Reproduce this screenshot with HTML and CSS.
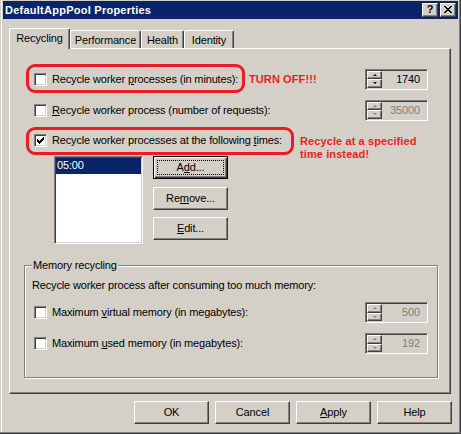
FILE: index.html
```html
<!DOCTYPE html>
<html>
<head>
<meta charset="utf-8">
<title>DefaultAppPool Properties</title>
<link rel="stylesheet" href="styles.css">
</head>
<body>
<div class="window">
  <div class="titlebar">
    <span class="title">DefaultAppPool Properties</span>
    <div class="caps">
      <span class="capbtn">?</span>
      <span class="capbtn"><svg width="8" height="7" viewBox="0 0 8 7" shape-rendering="crispEdges"><path d="M0 0h2v1h1v1h2v-1h1v-1h2v1h-1v1h-1v1h-1v1h1v1h1v1h1v1h-2v-1h-1v-1h-2v1h-1v1h-2v-1h1v-1h1v-1h1v-1h-1v-1h-1v-1h-1z"/></svg></span>
    </div>
  </div>

  <div class="tabs">
    <div class="tab active">Recycling</div>
    <div class="tab t-perf">Performance</div>
    <div class="tab t-health">Health</div>
    <div class="tab t-ident">Identity</div>
  </div>

  <div class="panel">
    <div class="row r1">
      <div class="chk"><span class="box"></span><span class="lbl">Recycle worker <u>p</u>rocesses (in minutes):</span></div>
      <div class="spin"><div class="arrows"><span class="ab"><i class="up"></i></span><span class="ab"><i class="dn"></i></span></div><span class="val">1740</span></div>
    </div>
    <div class="row r2">
      <div class="chk"><span class="box"></span><span class="lbl"><u>R</u>ecycle worker process (number of requests):</span></div>
      <div class="spin dis"><div class="arrows"><span class="ab"><i class="up"></i></span><span class="ab"><i class="dn"></i></span></div><span class="val">35000</span></div>
    </div>
    <div class="row r3">
      <div class="chk"><span class="box"><svg width="7" height="7" viewBox="0 0 7 7" shape-rendering="crispEdges"><path d="M6 0h1v3h-1v1h-1v1h-1v1h-1v1h-1v-1h-1v-1h-1v-3h1v1h1v1h1v-1h1v-1h1z"/></svg></span><span class="lbl">Recycle worker processes at the following <u>t</u>imes:</span></div>
    </div>

    <div class="times">
      <div class="listbox"><div class="item sel">05:00</div></div>
      <div class="tbtns">
        <div class="btn default"><span class="focus">A<u>d</u>d...</span></div>
        <div class="btn">Re<u>m</u>ove...</div>
        <div class="btn"><u>E</u>dit...</div>
      </div>
    </div>

    <div class="group">
      <div class="glabel">Memory recycling</div>
      <div class="gdesc">Recycle worker process after consuming too much memory:</div>
      <div class="row g1">
        <div class="chk"><span class="box"></span><span class="lbl">Maximum <u>v</u>irtual memory (in megabytes):</span></div>
        <div class="spin dis"><div class="arrows"><span class="ab"><i class="up"></i></span><span class="ab"><i class="dn"></i></span></div><span class="val">500</span></div>
      </div>
      <div class="row g2">
        <div class="chk"><span class="box"></span><span class="lbl">Maximum <u>u</u>sed memory (in megabytes):</span></div>
        <div class="spin dis"><div class="arrows"><span class="ab"><i class="up"></i></span><span class="ab"><i class="dn"></i></span></div><span class="val">192</span></div>
      </div>
    </div>

    <div class="mark mark1"></div>
    <div class="mark mark2"></div>
    <div class="note note1">TURN OFF!!!</div>
    <div class="note note2">Recycle at a specified<br>time instead!</div>
  </div>

  <div class="footer">
    <div class="btn">OK</div>
    <div class="btn">Cancel</div>
    <div class="btn"><u>A</u>pply</div>
    <div class="btn">Help</div>
  </div>
</div>
</body>
</html>
```

FILE: styles.css
```css
* { box-sizing: border-box; margin: 0; padding: 0; }
html, body { background: #d4d0c8; }
body {
  margin: 0;
  font-family: "Liberation Sans", Arial, sans-serif;
  font-size: 11px;
  line-height: 13px;
  letter-spacing: -0.15px;
  color: #000;
}
u { text-decoration: underline; text-underline-offset: 1px; }

.window {
  width: 461px;
  height: 434px;
  background: #d4d0c8;
  padding: 1px 3px 3px 3px;
  box-shadow: inset -1px -1px 0 #404040, inset -2px -2px 0 #808080, inset 1px 0 0 #d4d0c8, inset 2px 0 0 #fff;
}

/* title bar */
.titlebar {
  height: 18px;
  background: #0a246a;
  display: flex;
  align-items: center;
  justify-content: space-between;
  padding: 0 2px 0 2px;
}
.title { color: #fff; font-weight: bold; font-size: 11px; letter-spacing: 0.25px; }
.caps { display: flex; gap: 2px; }
.capbtn {
  width: 16px; height: 14px;
  background: #d4d0c8;
  border: 1px solid; border-color: #fff #404040 #404040 #fff;
  box-shadow: inset -1px -1px 0 #808080;
  display: flex; align-items: center; justify-content: center;
  font-weight: bold; font-size: 11px; line-height: 11px;
  padding-bottom: 1px;
  letter-spacing: 0;
}
.capbtn svg { display: block; fill: #000; }

/* tabs */
.tabs {
  height: 20px;
  margin: 9px 7px 0 6px;
  display: flex;
  align-items: flex-end;
}
.tab {
  height: 18px;
  border-left: 1px solid #fff;
  border-top: 1px solid #fff;
  border-right: 1px solid #404040;
  box-shadow: inset -1px 0 0 #808080;
  border-radius: 2px 2px 0 0;
  display: flex; align-items: center; justify-content: center;
  padding-top: 1px;
  background: #d4d0c8;
}
.tab.active {
  width: 61px;
  height: 21px;
  margin-bottom: -1px;
  position: relative;
  z-index: 1;
  padding-bottom: 2px;
}
.t-perf { width: 71px; }
.t-health { width: 43px; }
.t-ident { width: 50px; }

/* panel */
.panel {
  position: relative;
  height: 346px;
  margin: 0 7px 0 6px;
  border-top: 1px solid #fff;
  border-left: 1px solid #fff;
  border-right: 1px solid #404040;
  border-bottom: 1px solid #404040;
  box-shadow: inset -1px -1px 0 #808080;
  padding: 19px 12px 0 14px;
}

.row {
  height: 22px;
  display: flex;
  align-items: center;
  justify-content: space-between;
  padding: 0 10px;
}
.r2 { margin-top: 9px; }
.r3 { margin-top: 8px; }

.chk { display: flex; align-items: center; gap: 5px; }
.box {
  width: 13px; height: 13px;
  background: #fff;
  border: 1px solid; border-color: #808080 #fff #fff #808080;
  box-shadow: inset 1px 1px 0 #404040, inset -1px -1px 0 #d4d0c8;
  display: flex; align-items: center; justify-content: center;
}
.box svg { display: block; fill: #000; }

/* spinner */
.spin {
  width: 63px; height: 21px;
  background: #d4d0c8;
  border: 1px solid; border-color: #808080 #fff #fff #808080;
  box-shadow: inset 1px 1px 0 #404040, inset -1px -1px 0 #d4d0c8;
  padding: 1px;
  display: flex;
  align-items: center;
}
.arrows { display: flex; flex-direction: column; width: 15px; height: 17px; }
.ab {
  flex: 1;
  background: #d4d0c8;
  border: 1px solid; border-color: #fff #404040 #404040 #fff;
  box-shadow: inset -1px -1px 0 #808080;
  display: flex; align-items: center; justify-content: center;
}
.ab i { display: block; width: 0; height: 0; border-left: 2px solid transparent; border-right: 2px solid transparent; }
.ab i.up { border-bottom: 2px solid #000; }
.ab i.dn { border-top: 2px solid #000; }
.dis .ab i.up { border-bottom-color: #808080; }
.dis .ab i.dn { border-top-color: #808080; }
.val { flex: 1; text-align: right; padding-right: 6px; }
.dis .val { color: #808080; }

/* times */
.times {
  display: flex;
  margin-top: 5px;
  padding-left: 30px;
}
.listbox {
  width: 89px; height: 88px;
  background: #fff;
  border: 1px solid; border-color: #808080 #fff #fff #808080;
  box-shadow: inset 1px 1px 0 #404040, inset -1px -1px 0 #d4d0c8;
  padding: 1px;
}
.item { height: 16px; line-height: 15px; padding-left: 1px; }
.item.sel { background: #0a246a; color: #fff; }
.tbtns { margin-left: 10px; display: flex; flex-direction: column; gap: 7px; }
.tbtns .btn:first-child { margin-bottom: 1px; }

.btn {
  width: 75px; height: 23px;
  background: #d4d0c8;
  border: 1px solid; border-color: #fff #404040 #404040 #fff;
  box-shadow: inset -1px -1px 0 #808080;
  display: flex; align-items: center; justify-content: center;
}
.btn.default {
  border-color: #000;
  box-shadow: inset 1px 1px 0 #fff, inset -1px -1px 0 #404040, inset -2px -2px 0 #808080;
  padding: 3px;
  align-items: stretch;
}
.focus {
  flex: 1;
  border: 1px dotted #000;
  display: flex; align-items: center; justify-content: center;
}

/* group */
.group {
  margin-top: 21px;
  height: 113px;
  border: 1px solid #808080;
  box-shadow: inset 1px 1px 0 #fff, 1px 1px 0 #fff;
  padding: 0 9px 0 7px;
}
.glabel {
  display: block;
  width: fit-content;
  background: #d4d0c8;
  padding: 0 1px;
  margin-top: -7px;
}
.gdesc { margin-top: 7px; }
.group .row { padding: 0 0 0 2px; }
.g1 { margin-top: 10px; height: 21px; }
.g2 { margin-top: 10px; height: 21px; }

/* annotations */
.mark {
  position: absolute;
  border: 3px solid #ed1c24;
  border-radius: 9px;
}
.mark1 { left: 16px; top: 15px; width: 219px; height: 29px; }
.mark2 { left: 16px; top: 78px; width: 268px; height: 28px; }
.note {
  position: absolute;
  color: #ed1c24;
  font-weight: bold;
  font-size: 11px;
  line-height: 13px;
  letter-spacing: 0.1px;
}
.note1 { left: 239px; top: 24px; }
.note2 { left: 290px; top: 86px; }

/* footer */
.footer {
  display: flex;
  justify-content: flex-end;
  gap: 6px;
  margin-top: 7px;
  padding-right: 6px;
}
```
